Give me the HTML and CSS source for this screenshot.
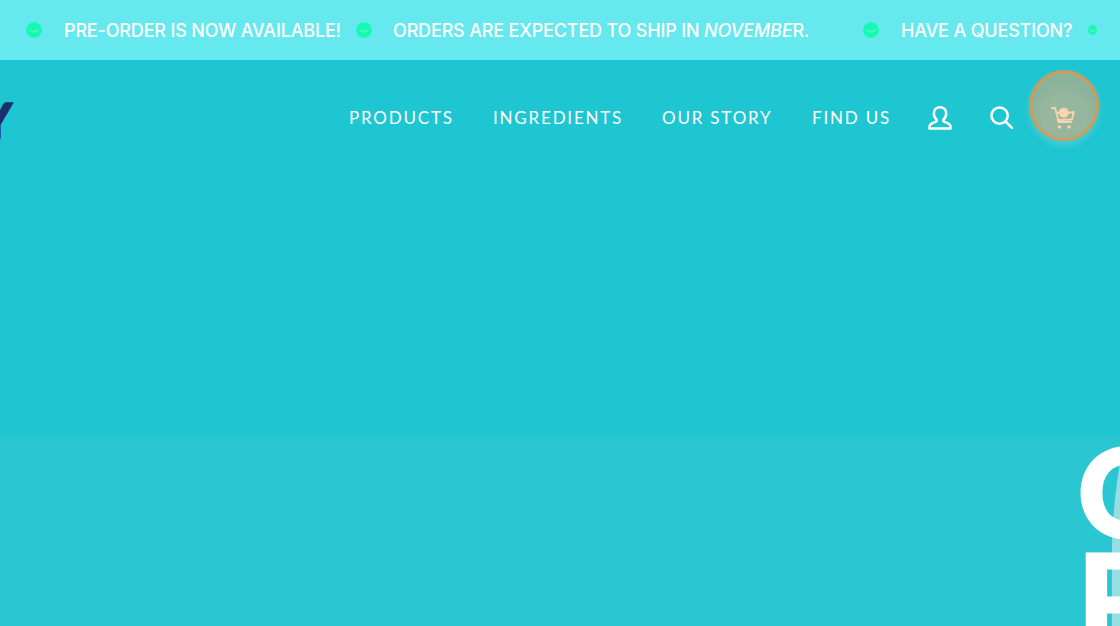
FILE: index.html
```html
<!DOCTYPE html>
<html lang="en">
<head>
<meta charset="utf-8">
<title>Pre-order</title>
<link rel="stylesheet" href="styles.css">
</head>
<body>
<div class="announce">
  <svg class="smile" viewBox="0 0 16 16"><circle cx="8" cy="8" r="7.800" fill="#12fbb0"/><path d="M2.500 6.500c3.500 3 7.500 3 11 0-1 5.500-10 5.500-11 0z" fill="#5cf0cf"/></svg>
  <span class="msg msg-a">PRE-ORDER IS NOW AVAILABLE!</span>
  <svg class="smile" viewBox="0 0 16 16"><circle cx="8" cy="8" r="7.800" fill="#12fbb0"/><path d="M2.500 6.500c3.500 3 7.500 3 11 0-1 5.500-10 5.500-11 0z" fill="#5cf0cf"/></svg>
  <span class="msg msg-b">ORDERS ARE EXPECTED TO SHIP IN <em>NOVEMBE</em>R.</span>
  <svg class="smile" viewBox="0 0 16 16"><circle cx="8" cy="8" r="7.800" fill="#12fbb0"/><path d="M2.500 6.500c3.500 3 7.500 3 11 0-1 5.500-10 5.500-11 0z" fill="#5cf0cf"/></svg>
  <span class="msg msg-c">HAVE A QUESTION?</span>
  <svg class="smile smile-narrow" viewBox="0 0 16 16" preserveAspectRatio="none"><circle cx="8" cy="8" r="7.800" fill="#12fbb0"/><path d="M2.500 6.500c3.500 3 7.500 3 11 0-1 5.500-10 5.500-11 0z" fill="#5cf0cf"/></svg>
</div>
<header class="header">
  <span class="logo">Y</span>
  <nav class="nav">
    <a class="link link-products">PRODUCTS</a>
    <a class="link link-ingredients">INGREDIENTS</a>
    <a class="link link-story">OUR STORY</a>
    <a class="link link-find">FIND US</a>
    <svg class="icon-user" viewBox="0 0 24 24" fill="none" stroke="#fff" stroke-width="2.500" stroke-linejoin="round"><path d="M1.500 22.500v-2c0-2.400 2.200-3.200 4.800-4.100 1.700-.6 2.500-1.200 2.500-2.500-2-1.700-3-3.900-3-6.400C5.800 3.600 8.300 1.300 12 1.300s6.200 2.300 6.200 6.200c0 2.500-1 4.700-3 6.400 0 1.300.8 1.900 2.500 2.500 2.600.9 4.800 1.700 4.800 4.100v2z"/></svg>
    <svg class="icon-search" viewBox="0 0 24 24" fill="none" stroke="#fff" stroke-width="2.700" stroke-linecap="round"><circle cx="10" cy="10" r="8.500"/><path d="M16.300 16.300l6.500 6.500"/></svg>
  </nav>
  <div class="cart">
    <svg class="icon-cart" viewBox="0 0 24 24" fill="none" stroke="#fbd3ae" stroke-width="1.800" stroke-linecap="round" stroke-linejoin="round"><path d="M1 2h3.200l3.500 14h12.500"/><path d="M5 6.500l4 .5M16 7l6.800-1-1.800 7.500-14.500.5"/><circle cx="12.800" cy="6.800" r="5" fill="#fbd3ae" stroke="none"/><circle cx="8.500" cy="21" r="1.700" fill="#fbd3ae" stroke="none"/><circle cx="18" cy="21" r="1.700" fill="#fbd3ae" stroke="none"/></svg>
  </div>
</header>
<section class="hero">
  <svg class="sliver" viewBox="0 0 10 200" preserveAspectRatio="none"><path d="M10 0C5 30 1 70 1 110V200H10z" fill="#97dde3"/></svg>
  <h1 class="headline">OUR<br>PRODUCTS</h1>
</section>
</body>
</html>
```
FILE: styles.css
```css
* { box-sizing: border-box; }
html, body { margin: 0; height: 100%; overflow: hidden; }
body { width: 1120px; height: 626px; display: flex; flex-direction: column; background: #2ac6d2; }

.announce {
  height: 60px; flex: none; display: flex; align-items: center; padding-left: 26px;
  background: #66e8ef; color: #fff; white-space: nowrap; overflow: hidden;
  font-family: Inter, "Liberation Sans", sans-serif; font-size: 18px; letter-spacing: -0.17px; font-weight: 500;
}
.smile { width: 16px; height: 16px; flex: none; filter: blur(0.5px); }
.smile-narrow { width: 9px; height: 10px; }
.msg { flex: none; margin-left: 22px; }
.msg-a { width: 292px; }
.msg-b { width: 470px; margin-left: 21px; }
.msg-c { width: 187px; }
.msg em { font-style: italic; }

.header {
  height: 375px; flex: none; display: flex; align-items: flex-start; padding: 10px 21px 0 0;
  background: #1ec6d2; overflow: hidden;
}
.logo {
  margin: 26px 0 0 -19.500px; color: #1c2f6b; line-height: 1;
  font-family: Lato, sans-serif; font-weight: 900; font-size: 48px; -webkit-text-stroke: 1.500px #1c2f6b;
}
.nav { display: flex; align-items: center; margin: 33px 16px 0 auto; height: 28px; color: #fff; font-family: Lato, sans-serif; font-size: 17px; letter-spacing: 1.800px; }
.link { flex: none; }
.link-products { width: 144px; }
.link-ingredients { width: 169px; }
.link-story { width: 150px; }
.link-find { width: 116px; }
.icon-user { width: 24px; height: 24px; margin-right: 38px; margin-top: 1px; }
.icon-search { width: 23px; height: 23px; margin-top: 1px; }

.cart {
  width: 70px; height: 71px; flex: none; display: flex; align-items: flex-end; justify-content: center; padding: 0 3px 8px 0;
  border: 3px solid #d49a5b; border-radius: 50%;
  background: radial-gradient(circle at 50% 68%, #97b69e 0, #97b69e 40%, #8bb39c 62%);
  box-shadow: 0 4px 6px rgba(130, 205, 200, .55);
}
.icon-cart { width: 24px; height: 24px; }

.hero { flex: 1; position: relative; overflow: hidden; padding: 2px 0 0 1078px; }
.sliver { position: absolute; right: 0; top: 28px; width: 9px; height: 170px; }
.headline {
  position: relative; margin: 0; color: #fff; white-space: nowrap;
  font-family: Lato, sans-serif; font-weight: 900; font-size: 122px; line-height: 106px; -webkit-text-stroke: 3px #fff;
}
```
